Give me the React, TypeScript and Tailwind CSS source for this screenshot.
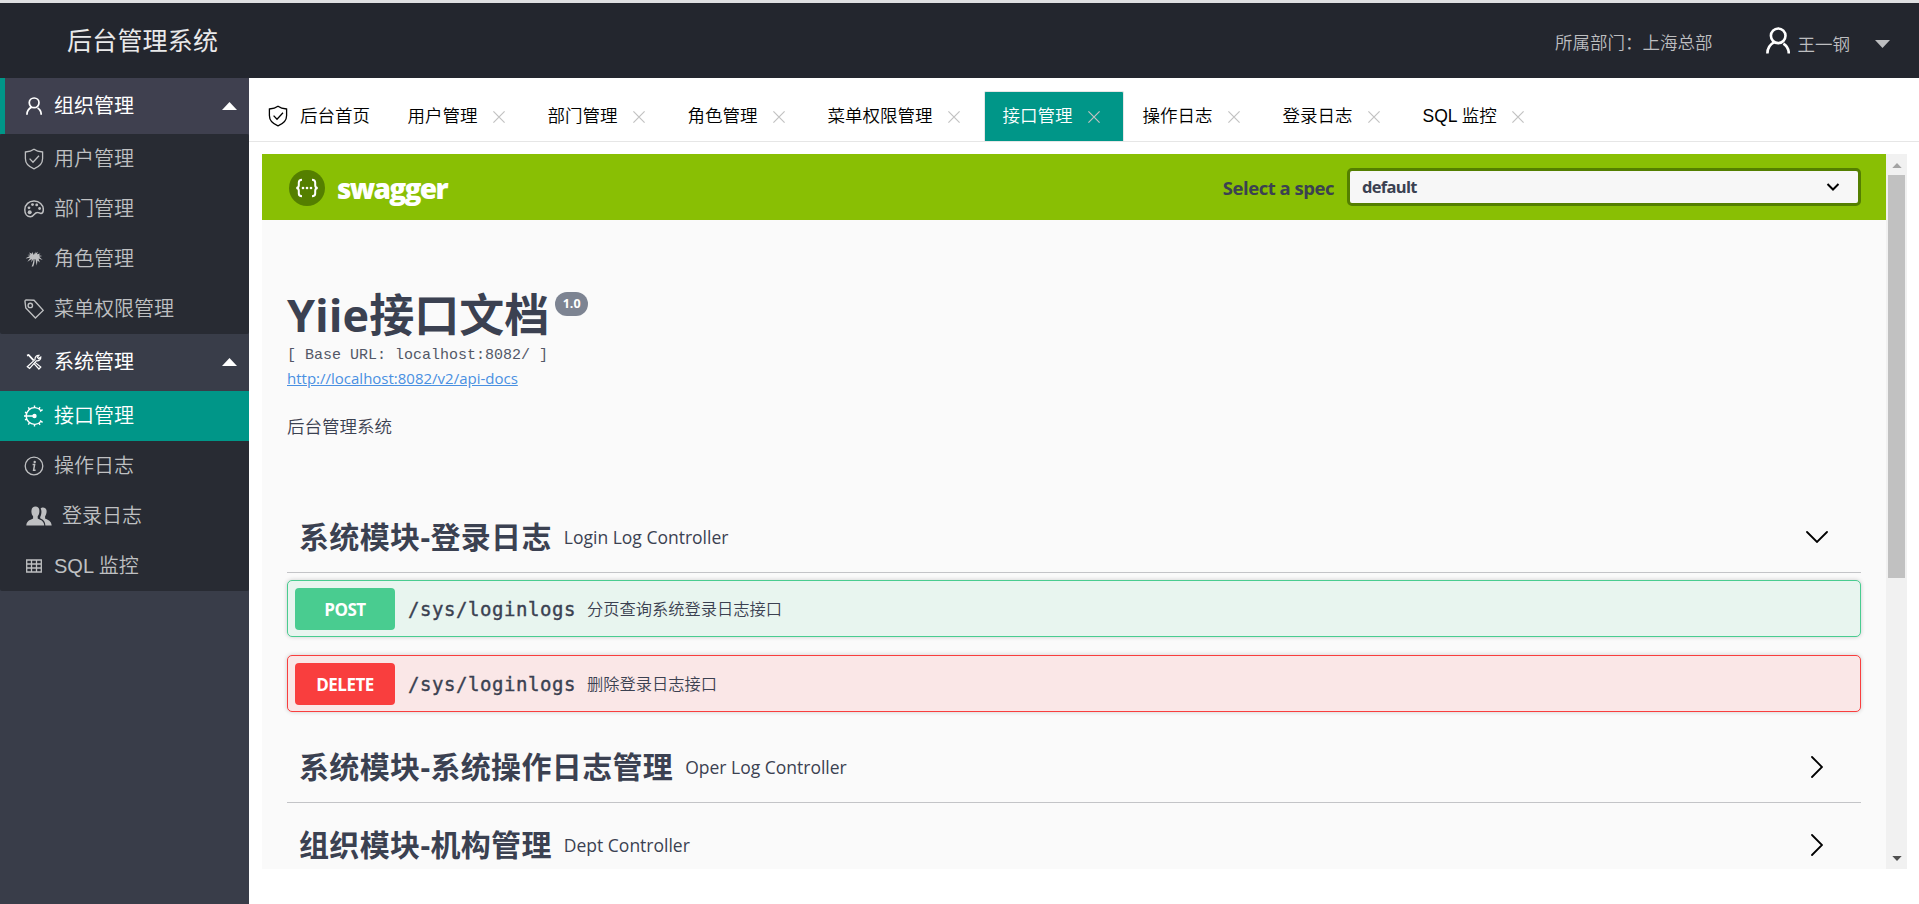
import React, { useState } from "react";

type IconProps = { className?: string };

function UserIcon({ className }: IconProps) {
  return (
    <svg viewBox="0 0 24 27" className={className} fill="none" stroke="currentColor" strokeWidth="2.6">
      <circle cx="12.2" cy="8.8" r="7.3" />
      <path d="M8.4 15.2C3.6 17.6 1.4 21.6 1.4 26.6M17.4 16.6c3.6 2.2 5.4 5.6 5.4 10" />
    </svg>
  );
}

function ShieldIcon({ className }: IconProps) {
  return (
    <svg viewBox="0 0 20 22" className={className} fill="none" stroke="currentColor" strokeWidth="1.3">
      <path d="M10 1.2C7.6 3 5 3.7 1.4 4v6.6c0 5 3.6 8.4 8.6 10.2 5-1.8 8.6-5.2 8.6-10.2V4C15 3.7 12.4 3 10 1.2Z" />
      <path d="M5.6 10.6l3.4 3.6 6-6.4" />
    </svg>
  );
}

function PaletteIcon({ className }: IconProps) {
  return (
    <svg viewBox="0 0 20 18" className={className} fill="none" stroke="currentColor" strokeWidth="1.5">
      <path d="M10.2 1C5 .9.8 4.6.8 9.8c0 4.2 2.4 7 5.6 7 3.6 0 3.8-4.6 7.2-4.4 1.4 0 2 1 3.4 1 1.6 0 2.3-1.6 2.3-3.8C19.3 4.6 15.2 1.1 10.2 1Z" />
      <g fill="currentColor" stroke="none">
        <circle cx="5.7" cy="12.3" r="2" />
        <circle cx="5" cy="7.8" r="1.4" />
        <circle cx="8.5" cy="4.6" r="1.4" />
        <circle cx="12.7" cy="4.9" r="1.4" />
        <circle cx="15.6" cy="8.5" r="1.4" />
      </g>
    </svg>
  );
}

function TreeIcon({ className }: IconProps) {
  return (
    <svg viewBox="0 0 18 16" className={className} fill="currentColor">
      <path d="M8.800 4 7.200.8 7 2.800 4 1.400l1.400 2.200L2.400 4l2.800.8L.2 7.400l5-.6-2.800 4L6.800 8l-.6 3.400L8.400 8C8.600 10.600 7.600 13 6.600 15.600h1.600C9.400 12.800 9.700 10 9.600 8l1 .4c.2 2 .6 4 1.200 6l.7-5 2.300 2.200-1.200-4 4 1.400-3.400-3.200 3-.8-3.400-.8 1.600-1.800-3.400.8.8-2.400-2.400 1.600L10.600.4Z" />
    </svg>
  );
}

function TagIcon({ className }: IconProps) {
  return (
    <svg viewBox="0 0 20 20" className={className} fill="none" stroke="currentColor" strokeWidth="1.4">
      <path d="M1 2.5 1.8 9l9.6 10 7.8-7.6L10 1.2 2.2.9Q1 .9 1 2.5Z" />
      <circle cx="6.3" cy="6.4" r="2.2" />
    </svg>
  );
}

function ToolsIcon({ className }: IconProps) {
  return (
    <svg viewBox="0 0 16 16" className={className} fill="none" stroke="currentColor">
      <path d="M1 1.6l1.6-.6 5 5.4" strokeWidth="1.8" />
      <path d="M9 8.4l5.8 4.6-1.9 2-4.900-5.400" strokeWidth="1.2" />
      <path d="M10.3 6.8 3.6 14.4 1.3 12.7 9 5.6C8.7 3.3 10.6 1 13 1.3L11.4 3.2l1.2 1.4L14.8 3c.3 2.4-2 4.3-4.5 3.8Z" strokeWidth="1.2" />
    </svg>
  );
}

function ApiIcon({ className }: IconProps) {
  return (
    <svg viewBox="0 0 20 22" className={className} fill="none" stroke="currentColor" strokeWidth="1.4">
      <path d="M17 5.6A8.400 8.400 0 1 0 17 16.4" />
      <path d="M10.5 2.5V.4M10.5 21.6v-2.1M5.4 4 4.3 2.4M5.4 18l-1.1 1.6M2.7 8 1 7.2M2.7 14l-1.7.8M15 3.8l1-1.6M15 18.2l1 1.6M16 6.4l2.6-1.7M16 15.600l2.600 1.700M0 11h10" />
      <circle cx="10.5" cy="11" r="2.2" fill="currentColor" stroke="none" />
    </svg>
  );
}

function InfoIcon({ className }: IconProps) {
  return (
    <svg viewBox="0 0 20 20" className={className} fill="none" stroke="currentColor" strokeWidth="1.3">
      <circle cx="10" cy="10" r="8.8" />
      <path d="M8.6 8.6h2l-1 5.6h2" strokeWidth="1.5" />
      <circle cx="10.7" cy="6" r="1.2" fill="currentColor" stroke="none" />
    </svg>
  );
}

function GroupIcon({ className }: IconProps) {
  return (
    <svg viewBox="0 0 26 20" className={className} fill="currentColor">
      <path d="M9.5.5c2.7 0 4 2 3.9 4.7 0 2-.8 4-1.7 5.1v2.3c2.3 1.2 6.3 2 6.6 7H.3c.2-5 4.5-5.8 6.8-7v-2.3C6 9.2 5.4 7.2 5.4 5.2 5.400 2.500 6.800.5 9.500.5Z" />
      <path d="M14.6 2.3C15.3 1.6 16 1.4 17 1.4c2.4 0 3.7 1.8 3.6 4.2 0 1.8-.6 3.4-1.5 4.6v2.2c2 1.1 6.4 2 6.6 7.2h-6.3c-.2-3.6-1.7-5.8-5.2-7.3v-1.200c1-2 2-6 .4-8.800Z" />
    </svg>
  );
}

function TableIcon({ className }: IconProps) {
  return (
    <svg viewBox="0 0 16 14" className={className} fill="none" stroke="currentColor" strokeWidth="1.3">
      <path d="M.7 1h14.6v12H.7ZM.7 5h14.6M.7 9h14.6M5.5 1v12M10.5 1v12" />
    </svg>
  );
}

function CloseIcon({ className }: IconProps) {
  return (
    <svg viewBox="0 0 12 12" className={className} fill="none" stroke="currentColor" strokeWidth="1.2">
      <path d="M.4.4l11.2 11.2M11.6.4.4 11.6" />
    </svg>
  );
}

function Triangle({ className }: IconProps) {
  return (
    <svg viewBox="0 0 15 8" className={className} fill="currentColor">
      <path d="M7.5 0 15 8H0Z" />
    </svg>
  );
}

function Chevron({ className }: IconProps) {
  return (
    <svg viewBox="0 0 22 12" className={className} fill="none" stroke="black" strokeWidth="1.8" strokeLinecap="round">
      <path d="M1 1l10 10L21 1" />
    </svg>
  );
}

const menu = [
  {
    title: "组织管理",
    icon: <UserIcon className="w-4 h-[18px]" />,
    items: [
      { name: "用户管理", icon: <ShieldIcon className="w-5 h-[22px]" /> },
      { name: "部门管理", icon: <PaletteIcon className="w-5 h-[18px]" /> },
      { name: "角色管理", icon: <TreeIcon className="w-[18px] h-4" /> },
      { name: "菜单权限管理", icon: <TagIcon className="w-5 h-5" /> },
    ],
  },
  {
    title: "系统管理",
    icon: <ToolsIcon className="w-4 h-4" />,
    items: [
      { name: "接口管理", icon: <ApiIcon className="w-5 h-[22px]" /> },
      { name: "操作日志", icon: <InfoIcon className="w-5 h-5" /> },
      { name: "登录日志", icon: <GroupIcon className="w-[26px] h-5" />, wide: true },
      { name: "SQL 监控", icon: <TableIcon className="w-4 h-3.5" /> },
    ],
  },
];

const tabs = [
  "用户管理",
  "部门管理",
  "角色管理",
  "菜单权限管理",
  "接口管理",
  "操作日志",
  "登录日志",
  "SQL 监控",
];

const operations = [
  {
    method: "POST",
    path: "/sys/loginlogs",
    summary: "分页查询系统登录日志接口",
    row: "border-[#49cc90] bg-[#e8f5ef]",
    button: "bg-[#49cc90]",
  },
  {
    method: "DELETE",
    path: "/sys/loginlogs",
    summary: "删除登录日志接口",
    row: "border-[#f93e3e] bg-[#fae7e7]",
    button: "bg-[#f93e3e]",
  },
];

function Sidebar({ active, setActive }: { active: string; setActive: (name: string) => void }) {
  return (
    <aside className="w-[249px] shrink-0 bg-[#393d49] text-[20px] font-[350]">
      {menu.map((group, index) => (
        <div key={group.title}>
          <div
            className={`flex items-center pr-3 font-normal text-white ${
              index === 0
                ? "h-14 border-l-[5px] border-[#009688] bg-[#3f404f] pl-[19px]"
                : "h-[57px] pl-6 pb-px"
            }`}
          >
            <span className="flex w-5 justify-center">{group.icon}</span>
            <span className="ml-2.5 leading-none">{group.title}</span>
            <Triangle className="ml-auto w-[15px] h-2" />
          </div>
          <ul className="rounded-[2px] bg-[#282b33]">
            {group.items.map((item) => (
              <li
                key={item.name}
                onClick={() => setActive(item.name)}
                className={`flex h-[50px] cursor-pointer items-center pl-6 ${
                  active === item.name ? "bg-[#009688] text-white" : "text-[#bfc0c2]"
                }`}
              >
                <span className={`flex justify-center ${item.wide ? "w-7 pl-0.5" : "w-5"}`}>
                  {item.icon}
                </span>
                <span className="ml-2.5 leading-none">{item.name}</span>
              </li>
            ))}
          </ul>
        </div>
      ))}
    </aside>
  );
}

function TabBar({ active, setActive }: { active: string; setActive: (name: string) => void }) {
  return (
    <div className="flex h-16 items-end border-b border-[#e6e6e6] text-[17.5px] font-[350] text-black">
      <div className="flex h-[50px] items-center pl-[19px] pr-[18.75px]">
        <ShieldIcon className="w-5 h-[22px]" />
        <span className="ml-3 pt-0.5 leading-none">后台首页</span>
      </div>
      {tabs.map((name) => (
        <div
          key={name}
          onClick={() => setActive(name)}
          className={`flex h-[50px] cursor-pointer items-center border-x border-t px-[17.75px] ${
            active === name
              ? "rounded-t-[2px] border-[#e6e6e6] bg-[#009688] text-white"
              : "border-transparent"
          }`}
        >
          <span className="pt-px leading-none">{name}</span>
          <span className="ml-2.5 flex w-[22.5px] justify-center text-[#c2c2c2]">
            <CloseIcon className="w-3 h-3" />
          </span>
        </div>
      ))}
    </div>
  );
}

function SectionHeader({ title, note, open }: { title: string; note: string; open?: boolean }) {
  return (
    <div className="flex h-[71px] shrink-0 items-center border-b border-[#c3c4c7] pl-3 pr-[33px]">
      <h4 className="text-[30px] font-bold leading-none tracking-[0.35px]">{title}</h4>
      <small className="ml-3 pt-0.5 text-[17.5px] leading-none">{note}</small>
      <span className="ml-auto flex w-[22px] justify-center">
        <Chevron className={`w-[22px] h-3 shrink-0 ${open ? "" : "-rotate-90"}`} />
      </span>
    </div>
  );
}

function SwaggerPage() {
  return (
    <div className="flex-1 overflow-hidden bg-[#fafafa] font-['Open_Sans','Noto_Sans_CJK_SC',sans-serif] text-[#3b4151]">
      <div className="flex h-[66px] items-center bg-[#89bf04] pl-[27px] pr-[25px]">
        <svg viewBox="0 0 36 36" className="mt-0.5 w-9 h-9" fill="none" stroke="white" strokeWidth="2">
          <circle cx="18" cy="18" r="18" fill="#547f00" stroke="none" />
          <path d="M13 9.8c-2.6 0-3.2.8-3.2 2.8v2.6c0 1.8-.6 2.7-2.5 2.8 1.9.1 2.5 1 2.5 2.8v2.6c0 2 .6 2.8 3.2 2.8M23 9.8c2.6 0 3.2.8 3.2 2.8v2.6c0 1.8.6 2.7 2.5 2.8-1.9.1-2.5 1-2.5 2.8v2.6c0 2-.6 2.8-3.2 2.8" />
          <g fill="white" stroke="none">
            <circle cx="14" cy="18" r="1.3" />
            <circle cx="18" cy="18" r="1.3" />
            <circle cx="22" cy="18" r="1.3" />
          </g>
        </svg>
        <span className="ml-3 pt-px text-[28px] font-extrabold leading-none tracking-[-1.7px] text-white">
          swagger
        </span>
        <span className="ml-auto mr-[13px] pt-0.5 text-[18.5px] font-bold leading-none tracking-[-0.48px]">
          Select a spec
        </span>
        <div className="flex h-[38px] w-[514px] items-center justify-between rounded-[5px] border-[3px] border-[#547f00] bg-[#f7f7f7] pl-3 pr-[18px]">
          <span className="text-[16.5px] font-bold leading-none tracking-[-0.7px]">default</span>
          <svg viewBox="0 0 14 8" className="w-3.5 h-2" fill="none" stroke="black" strokeWidth="2">
            <path d="M1.5 1 7 6.5 12.5 1" />
          </svg>
        </div>
      </div>

      <div className="flex flex-col pl-[25px] pr-[25px] pt-[68px]">
        <div className="flex h-[54px] items-start">
          <h2 className="text-[45px] font-bold leading-[54px]">Yiie接口文档</h2>
          <span className="ml-1.5 mt-1 flex h-6 w-[33px] items-center justify-center rounded-full bg-[#7d8492] text-[12.5px] font-bold leading-none text-white">
            1.0
          </span>
        </div>
        <pre className="h-6 pt-0.5 font-['Liberation_Mono',monospace] text-[15px] leading-6 text-[#535867]">
          [ Base URL: localhost:8082/ ]
        </pre>
        <a className="h-6 self-start text-[15px] leading-6 text-[#4990e2] underline">
          http://localhost:8082/v2/api-docs
        </a>
        <p className="mt-[22px] mb-0.5 h-7 text-[17.5px] leading-7">
          <span className="font-[350]">后台管理系统</span>
        </p>

        <div className="mt-[60px] flex flex-col">
          <SectionHeader title="系统模块-登录日志" note="Login Log Controller" open />
          <div className="mt-[7px] mb-5 flex flex-col gap-[18px]">
            {operations.map((item) => (
              <div
                key={item.method}
                className={`flex h-[57px] items-center rounded-[5px] border pl-[7px] shadow-[0_0_4px_rgba(0,0,0,0.19)] ${item.row}`}
              >
                <span
                  className={`flex h-[42px] w-[100px] items-center justify-center rounded-[4px] pt-0.5 text-[17px] font-bold leading-none tracking-[-0.5px] text-white ${item.button}`}
                >
                  {item.method}
                </span>
                <span className="ml-[13px] pt-0.5 font-['DejaVu_Sans_Mono',monospace] text-[19px] leading-none tracking-[0.56px] [-webkit-text-stroke:0.4px]">
                  {item.path}
                </span>
                <span className="ml-[11px] pt-0.5 text-[16.25px] font-[350] leading-none">{item.summary}</span>
              </div>
            ))}
          </div>
          <SectionHeader title="系统模块-系统操作日志管理" note="Oper Log Controller" />
          <div className="h-[7px]" />
          <SectionHeader title="组织模块-机构管理" note="Dept Controller" />
        </div>
      </div>
    </div>
  );
}

export default function App() {
  const [active, setActive] = useState("接口管理");

  return (
    <div className="flex h-[904px] w-full flex-col overflow-hidden bg-white font-['Liberation_Sans','Noto_Sans_CJK_SC',sans-serif]">
      <header className="flex h-[78px] shrink-0 items-center border-t-[3px] border-[#dedfe1] bg-[#23262e] pl-[67px] pr-[29px] text-[17.5px] font-[350] text-[#bdbec0]">
        <h1 className="pt-px text-[25px] font-normal leading-none tracking-[0.2px] text-[#e9e9ea]">后台管理系统</h1>
        <span className="ml-auto pt-1.5 leading-none">所属部门：上海总部</span>
        <UserIcon className="ml-[53px] w-6 h-[27px] text-white" />
        <span className="ml-2 mr-px pt-2.5 leading-none">王一钢</span>
        <Triangle className="ml-6 mt-1.5 w-[15px] h-2 rotate-180" />
      </header>
      <div className="flex min-h-0 flex-1">
        <Sidebar active={active} setActive={setActive} />
        <main className="flex min-w-0 flex-1 flex-col">
          <TabBar active={active} setActive={setActive} />
          <div className="mt-3 ml-[13px] mr-3 flex h-[715px]">
            <SwaggerPage />
            <div className="flex w-[21px] flex-col items-center bg-[#f1f1f1]">
              <span className="flex h-[21px] items-center pt-0.5 text-[#a3a3a3]">
                <Triangle className="w-2.5 h-[5px]" />
              </span>
              <div className="h-[403px] w-[17px] bg-[#c1c1c1]" />
              <span className="mt-auto flex h-[21px] items-center text-[#505050]">
                <Triangle className="w-2.5 h-[5px] rotate-180" />
              </span>
            </div>
          </div>
        </main>
      </div>
    </div>
  );
}
